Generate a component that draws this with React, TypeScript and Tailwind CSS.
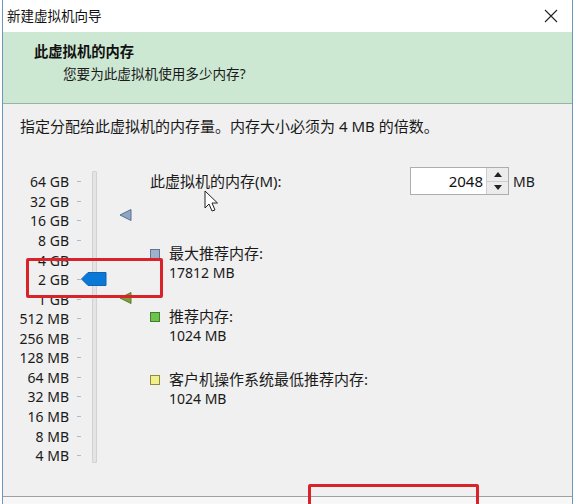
import React from "react";

const labels = [
  "64 GB", "32 GB", "16 GB", "8 GB", "4 GB", "2 GB", "1 GB",
  "512 MB", "256 MB", "128 MB", "64 MB", "32 MB", "16 MB", "8 MB", "4 MB",
];

const font = { fontFamily: '"Noto Sans", "Noto Sans CJK SC", sans-serif' };

function Legend({ color, border, title, value }: { color: string; border: string; title: string; value: string }) {
  return (
    <div className="flex">
      <div className={`w-[10px] h-[10px] mt-[5px] border ${border} ${color}`} />
      <div className="ml-[9px] leading-[19px] text-[#1a1a1a]">
        <div className="text-[15px]">{title}</div>
        <div className="text-[14px]">{value}</div>
      </div>
    </div>
  );
}

export default function App() {
  return (
    <div className="w-[574px] h-[504px] bg-white overflow-hidden relative" style={font}>
      <div className="ml-[2px] w-[571px] h-full border-x border-[#6b98bb] flex flex-col bg-[#f0f0f0]">
        {/* Title bar */}
        <div className="h-[32px] bg-white flex items-center justify-between pl-[4px] pr-[14px]">
          <span className="text-[13.5px] text-[#111]">新建虚拟机向导</span>
          <svg width="14" height="14" viewBox="0 0 14 14">
            <path d="M1 1 L13 13 M13 1 L1 13" stroke="#222" strokeWidth="1.1" fill="none" />
          </svg>
        </div>
        {/* Header */}
        <div className="h-[72px] bg-[#cce8d2] border-b border-[#9fb0a4] pl-[31px] pt-[9px]">
          <div className="text-[14.3px] font-bold text-[#111] leading-[22px]">此虚拟机的内存</div>
          <div className="pl-[29px] text-[13.6px] text-[#1a1a1a] leading-[22px]">您要为此虚拟机使用多少内存?</div>
        </div>
        {/* Body */}
        <div className="flex-1 flex flex-col relative">
          <div className="pl-[17px] pt-[12px] text-[15px] text-[#1a1a1a] leading-[20px]">
            指定分配给此虚拟机的内存量。内存大小必须为 4 MB 的倍数。
          </div>
          <div className="flex mt-[43px]">
            {/* Slider column */}
            <div className="relative w-[130px] flex">
              <div className="flex flex-col w-[66px] -mt-[7px]">
                {labels.map((l) => (
                  <div key={l} className="h-[19.57px] flex items-center justify-end text-[14px] text-[#1a1a1a]">
                    {l}
                  </div>
                ))}
              </div>
              <div className="flex flex-col ml-[8px] -mt-[7px]">
                {labels.map((l) => (
                  <div key={l} className="h-[19.57px] flex items-center">
                    <div className="w-[4px] h-px bg-[#b8b8b8]" />
                  </div>
                ))}
              </div>
              <div className="ml-[11px] -mt-[8px] w-[5px] h-[292px] bg-[#e4e4e4] border border-[#d2d2d2] rounded-[1px]" />
              {/* thumb */}
              <svg className="absolute left-[78px] top-[93px]" width="26" height="14" viewBox="0 0 26 14">
                <path d="M0.5 7 L7 0.5 L25 0.5 L25 13.5 L7 13.5 Z" fill="#0a78d7" stroke="#0c64b3" />
              </svg>
              {/* max recommended marker */}
              <svg className="absolute left-[116px] top-[29px]" width="14" height="14" viewBox="0 0 14 14">
                <path d="M1 7 L12 1.5 L12 12.5 Z" fill="#8ea6c4" stroke="#56708f" />
              </svg>
              {/* recommended marker */}
              <svg className="absolute left-[116px] top-[112px]" width="14" height="14" viewBox="0 0 14 14">
                <path d="M1 7 L12 1.5 L12 12.5 Z" fill="#7ca03e" stroke="#5b7a2a" />
              </svg>
            </div>
            {/* Right column */}
            <div className="flex-1 pl-[17px]">
              <div className="flex items-center -mt-[12px]">
                <span className="w-[260px] text-[15px] text-[#1a1a1a]">此虚拟机的内存(M):</span>
                <div className="flex items-center h-[28px] w-[99px] border border-[#adadad] bg-white">
                  <div className="flex-1 text-right pr-[3px] text-[15px] text-[#111]">2048</div>
                  <div className="w-[22px] h-full flex flex-col border-l border-[#cfcfcf]">
                    <div className="flex-1 flex items-center justify-center bg-[#ececec] border-b border-[#cfcfcf]">
                      <svg width="8" height="5" viewBox="0 0 8 5"><path d="M0 5 L4 0 L8 5 Z" fill="#222" /></svg>
                    </div>
                    <div className="flex-1 flex items-center justify-center bg-[#ececec]">
                      <svg width="8" height="5" viewBox="0 0 8 5"><path d="M0 0 L4 5 L8 0 Z" fill="#222" /></svg>
                    </div>
                  </div>
                </div>
                <span className="ml-[4px] text-[14px] text-[#1a1a1a]">MB</span>
              </div>
              <div className="mt-[49px] flex flex-col gap-[25px]">
                <Legend color="bg-[#9eb1cc]" border="border-[#5f7592]" title="最大推荐内存:" value="17812 MB" />
                <Legend color="bg-[#6fc24c]" border="border-[#3f7e2a]" title="推荐内存:" value="1024 MB" />
                <Legend color="bg-[#f2f08a]" border="border-[#8e8c3c]" title="客户机操作系统最低推荐内存:" value="1024 MB" />
              </div>
            </div>
          </div>
          {/* bottom separator */}
          <div className="absolute left-0 right-0 top-[392px] h-px bg-[#a0a0a0]" />
          <div className="absolute left-0 right-0 top-[393px] bottom-0 bg-[#f7f7f7]" />
        </div>
      </div>
      {/* mouse cursor */}
      <svg className="absolute left-[204px] top-[190px]" width="16" height="24" viewBox="0 0 16 24">
        <path d="M1 1 L1 18 L5 14 L8 21 L11 20 L8 13 L13.5 13 Z" fill="#fff" stroke="#222" strokeWidth="1" strokeLinejoin="round" />
      </svg>
      {/* red annotation boxes */}
      <div className="absolute left-[26px] top-[258px] w-[137px] h-[40px] border-[3px] border-[#d8232a] rounded-[2px]" />
      <div className="absolute left-[308px] top-[484px] w-[171px] h-[40px] border-[3px] border-[#d8232a] rounded-[2px]" />
    </div>
  );
}
